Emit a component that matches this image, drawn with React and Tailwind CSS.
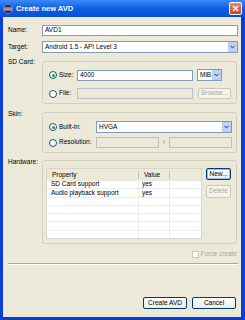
import React from 'react';

function Radio({ checked, label, width }) {
  return (
    <div className="flex items-center shrink-0" style={{ width }}>
      <span className="w-[8px] h-[8px] rounded-full border border-[#1c5180] bg-white flex items-center justify-center">
        {checked && <span className="w-[3px] h-[3px] rounded-full bg-[#21a121]" />}
      </span>
      <span className="ml-[2px]">{label}</span>
    </div>
  );
}

function TextBox({ value, disabled, className }) {
  return (
    <div
      className={`h-[11px] border border-[#7f9db9] flex items-center pl-[2px] ${disabled ? 'bg-[#ece9d8] border-[#b5c4d1]' : 'bg-white'} ${className}`}
    >
      {value}
    </div>
  );
}

function Combo({ value, className }) {
  return (
    <div className={`h-[12px] border border-[#7f9db9] bg-white flex items-center justify-between pl-[2px] ${className}`}>
      <span>{value}</span>
      <span className="w-[9px] h-[10px] mr-[0.5px] rounded-[1px] bg-[#c3d3fd] border border-[#b7c9f5] flex items-center justify-center">
        <svg width="5" height="4" viewBox="0 0 5 4">
          <path d="M0.5 0.8 L2.5 2.8 L4.5 0.8" stroke="#4d6185" strokeWidth="1.1" fill="none" />
        </svg>
      </span>
    </div>
  );
}

function Button({ children, disabled, focused, className }) {
  return (
    <div
      className={`flex items-center justify-center rounded-[2px] border ${
        focused ? 'border-[#003c74] shadow-[inset_0_0_0_1px_#9cb6f0]' : disabled ? 'border-[#c9c7ba]' : 'border-[#003c74]'
      } ${disabled ? 'text-[#aca899] bg-[#f5f4ea]' : 'bg-gradient-to-b from-white to-[#ecebe6]'} ${className}`}
    >
      {children}
    </div>
  );
}

function Group({ className, children }) {
  return <div className={`w-[195px] border border-[#d0d0bf] rounded-[3px] ${className}`}>{children}</div>;
}

const rows = [
  ['SD Card support', 'yes'],
  ['Audio playback support', 'yes'],
  ['', ''],
  ['', ''],
  ['', ''],
  ['', ''],
  ['', ''],
];

export default function App() {
  return (
    <div className="w-[245px] h-[320px] bg-[#0a3fd6] flex flex-col overflow-hidden font-['Liberation_Sans',Arial,sans-serif] text-[6.5px] leading-none text-black">
      {/* title bar */}
      <div className="h-[17px] shrink-0 bg-gradient-to-b from-[#3b8af8] via-[#0a5ee2] to-[#0750d6] flex items-center pl-[3px] pr-[3px]">
        <svg width="10" height="10" viewBox="0 0 10 10" className="shrink-0">
          <circle cx="5" cy="5" r="4.6" fill="#2c2255" />
          <circle cx="5" cy="5" r="4.6" fill="none" stroke="#a89fd0" strokeWidth="0.6" />
          <rect x="1" y="3.6" width="8" height="0.9" fill="#ffffff" />
          <rect x="1" y="5.5" width="8" height="0.9" fill="#ffffff" />
        </svg>
        <span className="ml-[3px] text-white font-bold text-[7.5px]">Create new AVD</span>
        <div className="ml-auto w-[13px] h-[13px] rounded-[2px] border border-white bg-gradient-to-b from-[#e88a6c] to-[#c8401c] flex items-center justify-center">
          <svg width="7" height="7" viewBox="0 0 7 7">
            <path d="M1 1 L6 6 M6 1 L1 6" stroke="#ffffff" strokeWidth="1.5" />
          </svg>
        </div>
      </div>

      {/* body */}
      <div className="ml-[3px] mr-[4px] mb-[3px] flex-1 bg-[#ece9d8] flex flex-col pl-[5px] pr-[3px]">
        <div className="mt-[8px] flex items-center">
          <span className="w-[34px] shrink-0">Name:</span>
          <TextBox value="AVD1" className="flex-1" />
        </div>
        <div className="mt-[5px] flex items-center">
          <span className="w-[34px] shrink-0">Target:</span>
          <Combo value="Android 1.5 - API Level 3" className="flex-1" />
        </div>

        {/* SD card */}
        <div className="mt-[8px] flex items-start">
          <span className="w-[34px] shrink-0 mt-[-2px]">SD Card:</span>
          <Group className="pt-[7px] pl-[6px] pb-[4px]">
            <div className="flex items-center">
              <Radio checked label="Size:" width={28} />
              <TextBox value="4000" className="w-[116px]" />
              <Combo value="MiB" className="w-[25px] ml-[4px]" />
            </div>
            <div className="mt-[7px] flex items-center">
              <Radio label="File:" width={28} />
              <TextBox disabled className="w-[116px]" />
              <Button disabled className="w-[33px] h-[11px] ml-[5px]">Browse...</Button>
            </div>
          </Group>
        </div>

        {/* skin */}
        <div className="mt-[8px] flex items-start">
          <span className="w-[34px] shrink-0 mt-[-1px]">Skin:</span>
          <Group className="pt-[8px] pl-[6px] pb-[4px]">
            <div className="flex items-center">
              <Radio checked label="Built-in:" width={47} />
              <Combo value="HVGA" className="w-[136px]" />
            </div>
            <div className="mt-[4px] flex items-center">
              <Radio label="Resolution:" width={47} />
              <TextBox disabled className="w-[63px]" />
              <span className="w-[10px] text-center text-[#aca899]">x</span>
              <TextBox disabled className="w-[63px]" />
            </div>
          </Group>
        </div>

        {/* hardware */}
        <div className="mt-[7px] flex items-start">
          <span className="w-[34px] shrink-0 mt-[-1px]">Hardware:</span>
          <Group className="pt-[7px] pl-[3px] pb-[4px] flex items-start">
            <div className="w-[156px] h-[71px] bg-white border border-[#d8d6cc] flex flex-col">
              <div className="h-[12px] shrink-0 bg-[#ece9d8] flex items-center">
                <span className="w-[92px] pl-[5px] border-r border-[#c7c5b2] h-[8px] flex items-center">Property</span>
                <span className="w-[31px] pl-[5px] border-r border-[#c7c5b2] h-[8px] flex items-center">Value</span>
              </div>
              <div className="flex-1 flex flex-col">
                {rows.map(([p, v], i) => (
                  <div key={i} className="flex-1 flex border-b border-[#ebebeb] last:border-b-0">
                    <span className="w-[92px] pl-[4px] border-r border-[#ebebeb] flex items-center">{p}</span>
                    <span className="w-[31px] pl-[3px] border-r border-[#ebebeb] flex items-center">{v}</span>
                  </div>
                ))}
              </div>
            </div>
            <div className="ml-[4px] flex flex-col">
              <Button focused className="w-[25px] h-[12px]">New...</Button>
              <Button disabled className="w-[25px] h-[13px] mt-[5px]">Delete</Button>
            </div>
          </Group>
        </div>

        {/* force create */}
        <div className="mt-[7px] flex items-center justify-end pr-[1px] text-[#aca899]">
          <span className="w-[7px] h-[7px] border border-[#cac8bb] bg-white" />
          <span className="ml-[2px]">Force create</span>
        </div>

        <div className="mt-[5px] border-t border-[#aca899] border-b border-b-white" />

        <div className="mt-auto mb-[8px] flex justify-end gap-[5px] pr-[2px]">
          <Button className="w-[44px] h-[12px]">Create AVD</Button>
          <Button className="w-[44px] h-[12px]">Cancel</Button>
        </div>
      </div>
    </div>
  );
}
